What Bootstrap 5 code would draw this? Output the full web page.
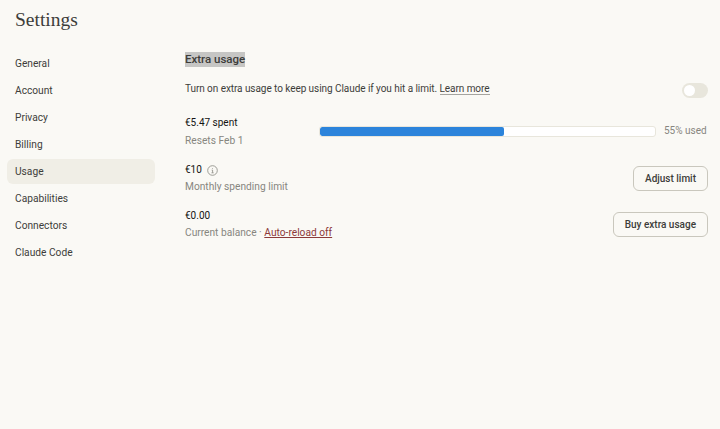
<!DOCTYPE html>
<html lang="en">
<head>
  <meta charset="UTF-8">
  <meta name="viewport" content="width=device-width, initial-scale=1.0">
  <title>Settings</title>
  <link href="https://cdn.jsdelivr.net/npm/bootstrap@5.3.2/dist/css/bootstrap.min.css" rel="stylesheet">
  <style>
    body {
      background-color: #faf9f5;
      color: #3d3d3a;
      font-family: Roboto, sans-serif;
      font-size: 10px;
      line-height: 15px;
      height: 429px;
      overflow: hidden;
    }
    .page-title {
      font-family: "Liberation Serif", serif;
      font-size: 19.5px;
      line-height: 24px;
      font-weight: 400;
      margin: 8px 0 0 15px;
      color: #3d3d3a;
    }
    .page-body { margin-top: 19px; }
    .side-nav { width: 148px; margin-left: 7px; flex-shrink: 0; font-size: 10.2px; }
    .side-link {
      display: block;
      height: 25px;
      margin-bottom: 2px;
      padding: 5px 8px;
      border-radius: 6px;
      color: #3d3d3a;
      text-decoration: none;
    }
    .side-link.current { background-color: #f0eee6; }
    .main-pane { margin-left: 30px; width: 523px; padding-top: 1px; }
    .section-title {
      font-size: 11.5px;
      font-weight: 500;
      line-height: 15px;
      margin: 0 0 14px;
      color: #3d3d3a;
    }
    .section-title span { background-color: #c6c6c4; display: inline-block; }
    .intro-text { letter-spacing: -.06px; }
    .learn-link {
      color: #3d3d3a;
      text-decoration: none;
      border-bottom: 1px solid #a5a49f;
    }
    .switch-track {
      width: 26px;
      height: 15px;
      border-radius: 8px;
      background-color: #e8e6dc;
      padding: 2px;
      margin-top: 2px;
    }
    .switch-knob {
      width: 11px;
      height: 11px;
      border-radius: 50%;
      background-color: #fff;
    }
    .intro-row { margin-bottom: 17px; }
    .muted-text { color: #87867f; }
    .stat-top { color: #141413; height: 15px; }
    .stat-sub { margin-top: 2px; font-size: 10.2px; }
    .usage-row { margin-bottom: 14px; height: 33px; }
    .usage-row .stat-sub { margin-top: 3px; }
    .usage-text { width: 135px; margin-right: -1px; }
    .usage-bar {
      height: 11px;
      background-color: #fff;
      border: 1px solid #e8e6dc;
      border-radius: 3px;
      margin-top: 11px;
      overflow: hidden;
    }
    .usage-fill { height: 100%; background-color: #2c84db; border-radius: 2px; }
    .usage-label { width: 44px; margin: 8px 0 0 8px; white-space: nowrap; }
    .limit-row { height: 33px; margin-bottom: 13px; }
    .limit-text { margin-top: -2px; }
    .plain-btn {
      height: 25px;
      padding: 0 11px;
      font-size: 10px;
      font-weight: 500;
      color: #3d3d3a;
      background-color: transparent;
      border: 1px solid #c9c7bd;
      border-radius: 6px;
      line-height: 23px;
    }
    .reload-link { color: #8c3a3a; }
    .info-dot {
      width: 11px;
      height: 11px;
      margin-left: 5px;
      vertical-align: -3px;
    }
  </style>
</head>
<body>
  <h1 class="page-title">Settings</h1>
  <div class="d-flex page-body">
    <nav class="side-nav">
      <a class="side-link" href="#">General</a>
      <a class="side-link" href="#">Account</a>
      <a class="side-link" href="#">Privacy</a>
      <a class="side-link" href="#">Billing</a>
      <a class="side-link current" href="#">Usage</a>
      <a class="side-link" href="#">Capabilities</a>
      <a class="side-link" href="#">Connectors</a>
      <a class="side-link" href="#">Claude Code</a>
    </nav>
    <main class="main-pane">
      <h2 class="section-title"><span>Extra usage</span></h2>
      <div class="d-flex justify-content-between intro-row">
        <div class="intro-text">Turn on extra usage to keep using Claude if you hit a limit. <a class="learn-link" href="#">Learn more</a></div>
        <div class="switch-track"><div class="switch-knob"></div></div>
      </div>
      <div class="d-flex usage-row">
        <div class="usage-text">
          <div class="stat-top">€5.47 spent</div>
          <div class="stat-sub muted-text">Resets Feb 1</div>
        </div>
        <div class="flex-grow-1">
          <div class="usage-bar"><div class="usage-fill" style="width: 55%"></div></div>
        </div>
        <div class="usage-label muted-text">55% used</div>
      </div>
      <div class="d-flex justify-content-between align-items-center limit-row">
        <div class="limit-text">
          <div class="stat-top">€10<svg class="info-dot" viewBox="0 0 11 11" fill="none" stroke="#87867f" stroke-width=".8"><circle cx="5.5" cy="5.5" r="4.8"/><path d="M4.7 5.1h.9v2.6M4.5 7.8h2.1M5.5 3.1v.7"/></svg></div>
          <div class="stat-sub muted-text">Monthly spending limit</div>
        </div>
        <button class="plain-btn" type="button">Adjust limit</button>
      </div>
      <div class="d-flex justify-content-between align-items-center limit-row">
        <div class="limit-text">
          <div class="stat-top">€0.00</div>
          <div class="stat-sub muted-text">Current balance · <a class="reload-link" href="#">Auto-reload off</a></div>
        </div>
        <button class="plain-btn" type="button">Buy extra usage</button>
      </div>
    </main>
  </div>
  <script src="https://cdn.jsdelivr.net/npm/bootstrap@5.3.2/dist/js/bootstrap.bundle.min.js"></script>
</body>
</html>
